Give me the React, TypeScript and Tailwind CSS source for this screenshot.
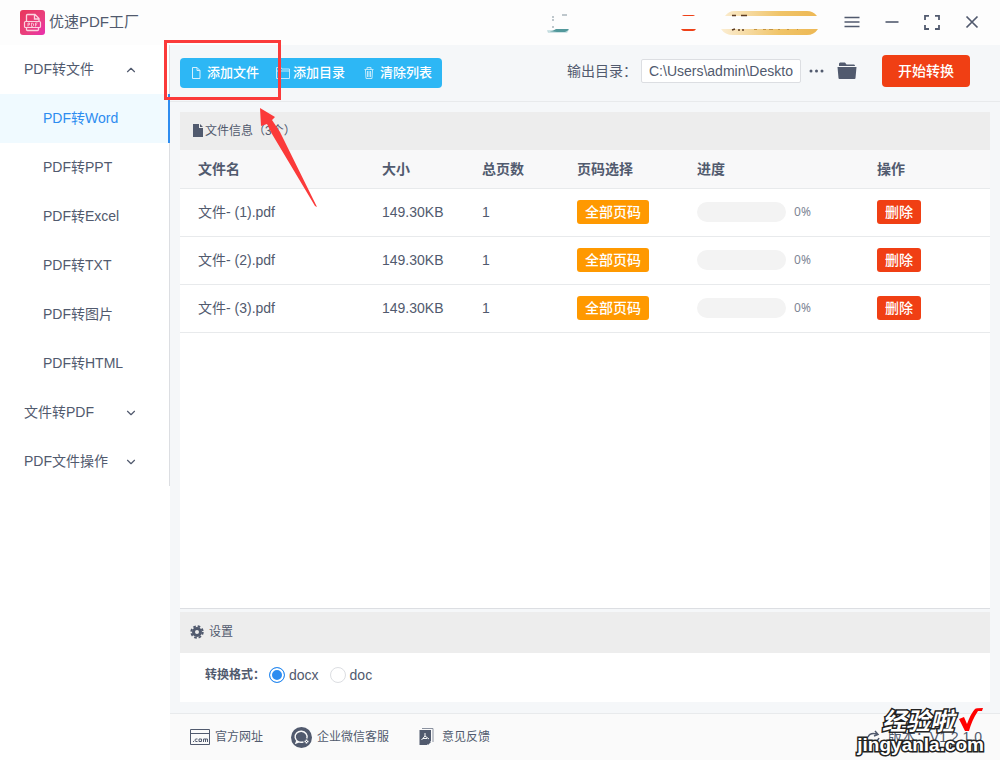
import React, { useState } from "react";
import { ChevronDown, ChevronUp } from "lucide-react";

const subItems = ["PDF转Word", "PDF转PPT", "PDF转Excel", "PDF转TXT", "PDF转图片", "PDF转HTML"];

const files = [
  { name: "文件- (1).pdf", size: "149.30KB", pages: 1, progress: 0 },
  { name: "文件- (2).pdf", size: "149.30KB", pages: 1, progress: 0 },
  { name: "文件- (3).pdf", size: "149.30KB", pages: 1, progress: 0 },
];

const Logo = () => (
  <svg width="25" height="25" viewBox="0 0 25 25" fill="none">
    <defs>
      <linearGradient id="logo" x1="0" y1="0" x2="1" y2="1">
        <stop offset="0" stopColor="#e8365a" />
        <stop offset="0.6" stopColor="#ea4080" />
        <stop offset="1" stopColor="#e92fb0" />
      </linearGradient>
    </defs>
    <rect width="25" height="25" rx="3" fill="url(#logo)" />
    <path d="M6.500 11V5.500q0-1 1-1h7.500l4 4V11M14.500 4.500V9h4.500" stroke="#fbd3df" strokeWidth="1.300" />
    <rect x="4.500" y="11.500" width="16" height="6" rx="1" stroke="#fbd3df" strokeWidth="1.200" />
    <path d="M6.500 17.500v2q0 1 1 1h10q1 0 1-1v-2" stroke="#fbd3df" strokeWidth="1.300" />
    <path d="M8 16.500v-3.500h1.500v1.800H8M11.500 13v3.500h1l1-1v-1.500l-1-1zM15.500 16.500V13h2M15.500 14.800h1.500" stroke="#fbd3df" strokeWidth="0.800" />
  </svg>
);

// 顶栏
const Header = () => (
  <header className="flex h-[45px] shrink-0 items-center bg-[#fdfdfd] pl-5 pr-5">
    <Logo />
    <h1 className="ml-1 text-[15px]">优速PDF工厂</h1>
    <div className="ml-auto flex items-center">
      <svg width="24" height="20" viewBox="0 0 24 20" className="mr-[109px]">
        <path d="M5 4h2M15 2h5M5 7h2M5 14h2" stroke="#a9b5bc" strokeWidth="1.500" />
        <path d="M0 17h22l-2 3-6 0H1z" fill="#cfe3e6" />
        <path d="M0 18q5 1 9-2h13q-2 3-4 3h-8z" fill="#52989b" />
      </svg>
      <svg width="17" height="18" viewBox="0 0 17 18" className="mr-6">
        <path d="M2 2q1-1 2-1h9q1 0 2 1zM1 15h15q-1 2-3 2H4q-2 0-3-2z" fill="#ee4118" />
      </svg>
      <svg width="98" height="24" viewBox="0 0 98 24" className="mr-[25px]">
        <defs>
          <linearGradient id="vip">
            <stop offset="0" stopColor="#fbedd2" />
            <stop offset="0.600" stopColor="#f0c468" />
            <stop offset="1" stopColor="#edb855" />
          </linearGradient>
        </defs>
        <path d="M4 5q4-5 9-5h73q6 0 10 5zM0 18h97q-4 6-11 6H12q-8 0-12-6z" fill="url(#vip)" />
        <path d="M11 4.500h4M20 4.500h6M11 19l3-1M18 18v2M22 18v2" stroke="#5c3b22" strokeWidth="1.500" />
        <path d="M33 18.500h3M42 18.500h3M48 18.500h4M57 18.500h2M66 18.500h2M76 18.500h1" stroke="#c49442" />
      </svg>
      <button aria-label="菜单">
        <svg width="16" height="16" viewBox="0 0 16 16" fill="none" stroke="#515a6e" strokeWidth="1.600">
          <path d="M.5 2.500h15M.5 7h15M.5 11.500h15" />
        </svg>
      </button>
      <button aria-label="最小化" className="ml-6">
        <svg width="16" height="16" viewBox="0 0 16 16" stroke="#515a6e" strokeWidth="1.600">
          <path d="M1.500 7h13" />
        </svg>
      </button>
      <button aria-label="最大化" className="ml-6">
        <svg width="16" height="16" viewBox="0 0 16 16" fill="none" stroke="#515a6e" strokeWidth="1.800">
          <path d="M1 5V.900h4M11 .900h4V5M15 10v4h-4M5 14H1v-4" />
        </svg>
      </button>
      <button aria-label="关闭" className="ml-6">
        <svg width="16" height="16" viewBox="0 0 16 16" stroke="#515a6e" strokeWidth="1.700">
          <path d="M2.500 1.500l11 11M13.500 1.500l-11 11" />
        </svg>
      </button>
    </div>
  </header>
);

type MenuTitleProps = {
  title: string;
  open?: boolean;
  onClick?: () => void;
};

const MenuTitle: React.FC<MenuTitleProps> = ({ title, open, onClick }) => (
  <button className="flex h-[49px] w-full items-center justify-between pb-[2px] pl-6 pr-[31px] text-sm" onClick={onClick}>
    {title}
    {open ? <ChevronUp size={14} className="mt-[2px]" /> : <ChevronDown size={14} className="mt-[2px]" />}
  </button>
);

const Sidebar = () => {
  const [active, setActive] = useState("PDF转Word");
  const [open, setOpen] = useState(true);

  return (
    <aside className="w-[170px] shrink-0 bg-white">
      <nav className="border-r border-[#dcdee2]">
        <MenuTitle title="PDF转文件" open={open} onClick={() => setOpen(!open)} />
        {open &&
          subItems.map((item) => (
            <a
              key={item}
              href="#"
              onClick={() => setActive(item)}
              className={
                active === item
                  ? "-mr-px flex h-[49px] items-center border-r-2 border-[#2d8cf0] bg-[#f0faff] pb-[2px] pl-[43px] text-sm text-[#2d8cf0]"
                  : "flex h-[49px] items-center pb-[2px] pl-[43px] text-sm"
              }
            >
              {item}
            </a>
          ))}
        <MenuTitle title="文件转PDF" />
        <MenuTitle title="PDF文件操作" />
      </nav>
    </aside>
  );
};

const Toolbar = () => (
  <div className="relative flex h-[57px] shrink-0 items-center border-b border-[#e8eaec] pb-1 pl-[10px] pr-[30px]">
    <div className="mt-1 flex h-[30px] items-center rounded bg-[#2db7f5] px-[10px] text-[13px] font-medium text-white">
      <button className="flex items-center">
        <svg width="12" height="12" viewBox="0 0 12 12" fill="none" stroke="#fff" className="mr-[5px] opacity-80">
          <path d="M2.500.5H7l3 3v8H2.500zM7 .5v3h3" />
        </svg>
        添加文件
      </button>
      <button className="ml-[17px] flex items-center">
        <svg width="14" height="12" viewBox="0 0 14 12" fill="none" stroke="#fff" className="mr-[3px] opacity-70">
          <path d="M.5.500h4.500l1 1.500h7.500v9.500H.5zM.5 4h13" />
        </svg>
        添加目录
      </button>
      <button className="ml-[18px] flex items-center">
        <svg width="12" height="12" viewBox="0 0 12 12" fill="none" stroke="#fff" className="mr-[5px] opacity-70">
          <path d="M1.500 2.500h9M4 2.500v-2h4v2M2.500 3l.5 8.500h6l.5-8.500M4.500 4v6M6 4v6M7.500 4v6" />
        </svg>
        清除列表
      </button>
    </div>
    <label htmlFor="output" className="ml-auto text-sm">输出目录：</label>
    <input
      id="output"
      defaultValue="C:\Users\admin\Deskto"
      className="ml-1 h-6 w-40 rounded-xs border border-[#dcdee2] bg-white px-[7px] text-sm"
    />
    <button aria-label="更多" className="ml-2">
      <svg width="16" height="16" viewBox="0 0 16 16" fill="#515a6e">
        <circle cx="2" cy="8" r="1.500" />
        <circle cx="7.500" cy="8" r="1.500" />
        <circle cx="13" cy="8" r="1.500" />
      </svg>
    </button>
    <button aria-label="打开目录" className="ml-3">
      <svg width="20" height="18" viewBox="0 0 20 18" fill="#515a6e">
        <path d="M2 4V1.500L3 .5h5l1.500 2H17q1 0 1 1.500z" />
        <path d="M.5 5h19l-1 11q0 1-1 1h-15q-1 0-1-1z" />
      </svg>
    </button>
    <button className="ml-[25px] h-8 w-[88px] rounded bg-[#f03f14] text-sm font-medium text-white">开始转换</button>
    {/* 添加文件的提示框和箭头 */}
    <div className="pointer-events-none absolute -left-[6px] -top-[5px] h-[60px] w-[117px] border-3 border-[#fb3a3a]" />
    <svg width="58" height="101" viewBox="0 0 58 101" className="pointer-events-none absolute left-[90px] top-[63px] z-10">
      <path d="M0 0L15 9l-3 3 8 12 37 75-2-1L12 26 7 16l-6 2z" fill="#fb3a3a" />
    </svg>
  </div>
);

const FileTable = () => (
  <section className="flex flex-1 flex-col border-b border-[#dcdee2] bg-white">
    <h2 className="flex h-[38px] items-center bg-[#ededed] pl-3 text-xs">
      <svg width="12" height="14" viewBox="0 0 12 14" fill="#515a6e" className="mr-px">
        <path d="M1 0h6v4h4v9H1zM8 0l3 3H8z" />
      </svg>
      文件信息（3个）
    </h2>
    <table className="w-full table-fixed text-left text-sm">
      <thead className="bg-[#f8f8f9]">
        <tr className="h-[38px] border-b border-[#e8eaec]">
          <th className="w-[184px] pl-[18px] font-bold">文件名</th>
          <th className="w-[100px] pl-[18px] font-bold">大小</th>
          <th className="w-[95px] pl-[18px] font-bold">总页数</th>
          <th className="w-[120px] pl-[18px] font-bold">页码选择</th>
          <th className="w-[180px] pl-[18px] font-bold">进度</th>
          <th className="pl-[18px] font-bold">操作</th>
        </tr>
      </thead>
      <tbody>
        {files.map((file) => (
          <tr key={file.name} className="h-12 border-b border-[#e8eaec]">
            <td className="pl-[18px]">{file.name}</td>
            <td className="pl-[18px]">{file.size}</td>
            <td className="pl-[18px]">{file.pages}</td>
            <td className="pl-[18px]">
              <button className="block h-6 w-[72px] rounded-[3px] bg-[#ff9900] font-medium text-white">全部页码</button>
            </td>
            <td className="pl-[18px]">
              <div className="flex items-center">
                <div className="h-5 w-[89px] overflow-hidden rounded-full bg-[#f3f3f3]">
                  <div className="h-full bg-[#2db7f5]" style={{ width: `${file.progress}%` }} />
                </div>
                <span className="ml-2 font-['Noto_Sans'] text-xs text-[#808695]">{file.progress}%</span>
              </div>
            </td>
            <td className="pl-[18px]">
              <button className="block h-6 w-11 rounded-[3px] bg-[#f03f14] font-medium text-white">删除</button>
            </td>
          </tr>
        ))}
      </tbody>
    </table>
  </section>
);

const Settings = () => {
  const [format, setFormat] = useState("docx");

  return (
    <section className="mt-[3px] h-[90px] shrink-0 bg-white text-xs">
      <h2 className="flex h-[41px] items-center bg-[#ededed] pb-[2px] pl-[10px]">
        <svg width="14" height="14" viewBox="0 0 14 14" className="mr-[5px]">
          <circle cx="7" cy="7" r="3.500" fill="none" stroke="#515a6e" strokeWidth="3" />
          <circle cx="7" cy="7" r="5.700" fill="none" stroke="#515a6e" strokeWidth="2" strokeDasharray="2.600 1.877" />
        </svg>
        设置
      </h2>
      <fieldset className="flex h-[43px] items-center pl-[25px]">
        <span className="w-16 font-bold">转换格式：</span>
        {["docx", "doc"].map((item) => (
          <label key={item} className="mr-[11px] flex items-center gap-1 text-sm">
            <input
              type="radio"
              name="format"
              checked={format === item}
              onChange={() => setFormat(item)}
              className="size-4 appearance-none rounded-full border border-[#dcdee2] bg-white checked:border-[#2d8cf0] checked:bg-[#2d8cf0] checked:shadow-[inset_0_0_0_2px_white]"
            />
            {item}
          </label>
        ))}
      </fieldset>
    </section>
  );
};

const Footer = () => (
  <footer className="relative mt-[11px] flex h-[47px] shrink-0 items-center border-t border-[#e8eaec] bg-[#fafafa] pl-5 text-xs">
    <a href="#" className="flex items-center gap-[5px]">
      <svg width="20" height="16" viewBox="0 0 20 16" fill="none" stroke="#515a6e">
        <path d="M.5.500h19v15H.5zM.5 4.500h19" />
        <path d="M3 12.500h1M7.500 10H6q-1 0-1 1.200t1 1.300h1.500M9 10h2.500v2.500H9zM13.500 13v-3h4v3M15.500 10v3" />
      </svg>
      官方网址
    </a>
    <a href="#" className="ml-7 flex items-center gap-[5px]">
      <svg width="21" height="21" viewBox="0 0 21 21" fill="none" stroke="#fafafa" strokeWidth="1.400">
        <circle cx="10.500" cy="10.500" r="10.500" fill="#515a6e" stroke="none" />
        <path d="M15.800 11.500a6 5.500 0 1 0-3.300 3.300M6 13.500l-1 2.500 3-1.200" />
        <path d="M15.500 12.500v4M13.500 14.500h4" strokeWidth="1.600" strokeDasharray="1.500 1" />
      </svg>
      企业微信客服
    </a>
    <a href="#" className="ml-7 flex items-center gap-[5px]">
      <svg width="20" height="18" viewBox="0 0 20 18">
        <path d="M5 .5h11V14" fill="none" stroke="#8b92a0" />
        <path d="M2.500 2H14v11l-4 4H2.500z" fill="#515a6e" />
        <path d="M8 5v3l-3.500 4M8 8l4 3M6 10.500h4" fill="none" stroke="#fafafa" />
        <path d="M11 17v-3h3z" fill="#515a6e" />
      </svg>
      意见反馈
    </a>
    <div className="ml-auto flex items-center gap-2 pr-[18px] text-sm">
      <svg width="13" height="14" viewBox="0 0 13 14" fill="none" stroke="#515a6e" strokeWidth="1.500">
        <path d="M1 7q2-5 9-3M8 1l3 3.500L7 6M12 8q-2 5-9 3" />
      </svg>
      版本：V1.2.1.0
    </div>
    {/* 右下角水印 */}
    <div className="pointer-events-none absolute right-4 -top-[6px] font-bold text-white [-webkit-text-stroke:3px_#222] [paint-order:stroke_fill]">
      <div className="flex items-center justify-end text-2xl leading-7 italic">
        经验啦
        <svg width="26" height="24" viewBox="0 0 26 24" className="mb-1 ml-1">
          <path d="M1 11l5-2 3 7Q13 5 17 1q1-1 8-1l-1 3h-4Q14 12 11 23H7z" fill="#f00" />
        </svg>
      </div>
      <div className="-mt-px text-[19px] leading-5">jingyanla.com</div>
    </div>
  </footer>
);

const App = () => (
  <div className="flex h-screen flex-col overflow-hidden bg-white font-['Liberation_Sans','Noto_Sans_CJK_SC',sans-serif] text-[#515a6e]">
    <Header />
    <div className="flex min-h-0 flex-1">
      <Sidebar />
      <main className="flex min-w-0 flex-1 flex-col bg-[#f5f7f9]">
        <Toolbar />
        <div className="flex min-h-0 flex-1 flex-col px-[10px] pt-[10px]">
          <FileTable />
          <Settings />
        </div>
        <Footer />
      </main>
    </div>
  </div>
);

export default App;
